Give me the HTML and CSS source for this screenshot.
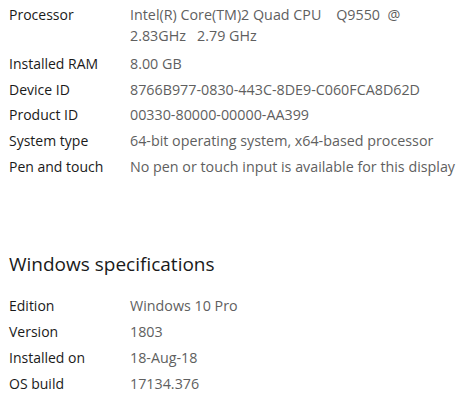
FILE: index.html
```html
<!DOCTYPE html>
<html>
<head>
<meta charset="utf-8">
<link rel="stylesheet" href="styles.css">
</head>
<body>
<div class="page">
  <dl class="specs specs-device">
    <dt>Processor</dt>
    <dd class="pre">Intel(R) Core(TM)2 Quad CPU    Q9550  @<br>2.83GHz   2.79 GHz</dd>
    <dt>Installed RAM</dt>
    <dd>8.00 GB</dd>
    <dt>Device ID</dt>
    <dd>8766B977-0830-443C-8DE9-C060FCA8D62D</dd>
    <dt>Product ID</dt>
    <dd>00330-80000-00000-AA399</dd>
    <dt>System type</dt>
    <dd>64-bit operating system, x64-based processor</dd>
    <dt>Pen and touch</dt>
    <dd>No pen or touch input is available for this display</dd>
  </dl>
  <h2 class="heading">Windows specifications</h2>
  <dl class="specs">
    <dt>Edition</dt>
    <dd>Windows 10 Pro</dd>
    <dt>Version</dt>
    <dd>1803</dd>
    <dt>Installed on</dt>
    <dd>18-Aug-18</dd>
    <dt>OS build</dt>
    <dd>17134.376</dd>
  </dl>
</div>
</body>
</html>
```
FILE: styles.css
```css
html, body {
  margin: 0;
  padding: 0;
  background: #ffffff;
}
body {
  font-family: "Open Sans", "Noto Sans", sans-serif;
  font-size: 14px;
  color: #1a1a1a;
}
.page {
  padding: 4px 0 0 9px;
}
.specs {
  display: grid;
  grid-template-columns: 121px auto;
  row-gap: 5px;
  margin: 0;
}
.specs-device {
  row-gap: 4.75px;
}
.specs dt, .specs dd {
  margin: 0;
  line-height: 21px;
}
.specs dd {
  color: #5f5f5f;
  font-size: 14.3px;
}
.specs dd.pre {
  white-space: pre;
  padding-bottom: 2px;
}
.heading {
  font-weight: 400;
  font-size: 19px;
  color: #1a1a1a;
  margin: 73px 0 17px 0;
  line-height: 28px;
}
```
